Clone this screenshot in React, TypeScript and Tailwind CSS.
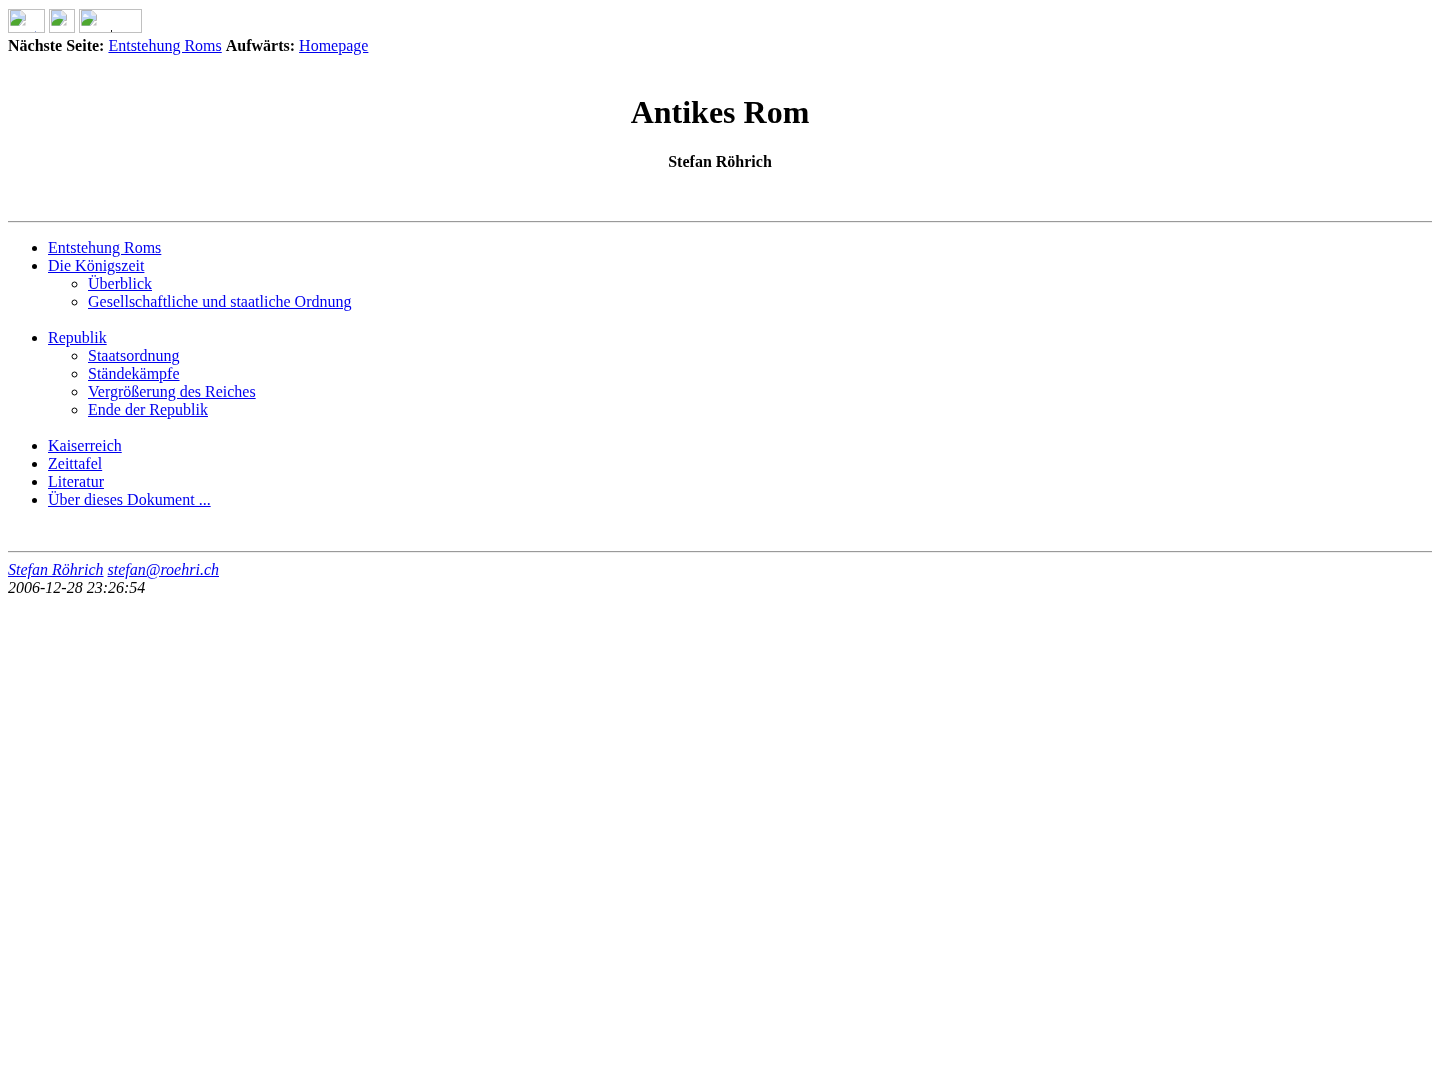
const serif = "font-['Times_New_Roman','Liberation_Serif',serif]";
const link = "text-[#0000ee] underline";
const rule = "border-0 border-t border-b border-t-[#9a9a9a] border-b-[#eeeeee]";

function Broken({ w, mark }: { w: number; mark?: { x: number; h: number; color: string } }) {
  return (
    <span className="inline-block h-6 border border-[#c0c0c0] relative overflow-hidden" style={{ width: w }}>
      <svg className="absolute left-0 top-0" width="18" height="18" viewBox="0 0 18 18">
        <path d="M1.500 0.500h10.500l4.500 4.500v5.500h-2l-4 5h-9z" fill="#fff" stroke="#b4b4b4" />
        <path d="M2 1h9.500v4.500h4.500v4.500h-1.800l-4 5.500H2z" fill="#bfd4f6" />
        <path d="M3.500 5.500c0-2 3.500-2 3.500 0h1.500v1.500H3z" fill="#f4f8ff" />
        <path d="M2 15.500v-3c3-4 8-4.500 11.500-3l-4 6z" fill="#4fa72f" />
        <path d="M12 1l4 4h-4z" fill="#e6e6e6" />
        <path d="M16.500 12v3.500h-3.500z" fill="#bdbdbd" />
      </svg>
      {mark && (
        <span
          className="absolute bottom-0 w-px"
          style={{ left: mark.x, height: mark.h, backgroundColor: mark.color }}
        />
      )}
    </span>
  );
}

function Item({ children, sub }: { children: string; sub?: string[] }) {
  return (
    <li className="list-disc">
      <a className={link}>{children}</a>
      {sub && (
        <ul className="pl-10 mb-[18px]">
          {sub.map((s) => (
            <li key={s} className="list-[circle]">
              <a className={link}>{s}</a>
            </li>
          ))}
        </ul>
      )}
    </li>
  );
}

export default function App() {
  return (
    <div className={`${serif} will-change-transform text-base leading-[18px] text-black p-2 min-h-[1080px]`}>
      <div className="flex gap-1 pt-px h-[25px]">
        <Broken w={37} mark={{ x: 26, h: 1, color: "#8aa0d8" }} />
        <Broken w={26} />
        <Broken w={63} mark={{ x: 31, h: 2, color: "#222222" }} />
      </div>
      <div className="mt-1 flex gap-1">
        <b>Nächste Seite:</b>
        <a className={link}>Entstehung Roms</a>
        <b>Aufwärts:</b>
        <a className={link}>Homepage</a>
      </div>
      <h1 className="mt-[39px] text-center text-[32px] leading-[37px] font-bold">Antikes Rom</h1>
      <p className="mt-[22px] text-center font-bold">Stefan Röhrich</p>
      <hr className={`mt-[50px] ${rule}`} />
      <ul className="mt-4 pl-10">
        <Item>Entstehung Roms</Item>
        <Item sub={["Überblick", "Gesellschaftliche und staatliche Ordnung"]}>Die Königszeit</Item>
        <Item sub={["Staatsordnung", "Ständekämpfe", "Vergrößerung des Reiches", "Ende der Republik"]}>Republik</Item>
        <Item>Kaiserreich</Item>
        <Item>Zeittafel</Item>
        <Item>Literatur</Item>
        <Item>Über dieses Dokument ...</Item>
      </ul>
      <hr className={`mt-[42px] ${rule}`} />
      <address className="mt-2 italic">
        <div className="flex gap-1">
          <a className={link}>Stefan Röhrich</a>
          <a className={link}>stefan@roehri.ch</a>
        </div>
        <div>2006-12-28 23:26:54</div>
      </address>
    </div>
  );
}
